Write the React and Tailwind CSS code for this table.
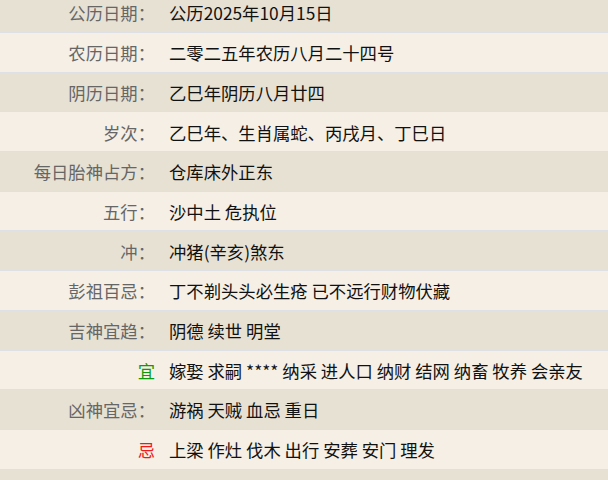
import React from "react";

const rows = [
  { k: "公历日期：", v: "公历2025年10月15日" },
  { k: "农历日期：", v: "二零二五年农历八月二十四号" },
  { k: "阴历日期：", v: "乙巳年阴历八月廿四" },
  { k: "岁次：", v: "乙巳年、生肖属蛇、丙戌月、丁巳日" },
  { k: "每日胎神占方：", v: "仓库床外正东" },
  { k: "五行：", v: "沙中土 危执位" },
  { k: "冲：", v: "冲猪(辛亥)煞东" },
  { k: "彭祖百忌：", v: "丁不剃头头必生疮 已不远行财物伏藏" },
  { k: "吉神宜趋：", v: "阴德 续世 明堂" },
  { k: "宜", v: "嫁娶 求嗣 **** 纳采 进人口 纳财 结网 纳畜 牧养 会亲友", c: "text-[#0a9a0a]" },
  { k: "凶神宜忌：", v: "游祸 天贼 血忌 重日" },
  { k: "忌", v: "上梁 作灶 伐木 出行 安葬 安门 理发", c: "text-[#f01818]" },
  { k: "", v: "" },
];

export default function App() {
  return (
    <div
      className="w-[608px] h-[480px] overflow-hidden bg-[#f5efe5]"
      style={{ fontFamily: '"Noto Sans CJK SC", "Noto Sans", sans-serif' }}
    >
      <div className="-mt-[6.7px]">
        {rows.map((r, i) => (
          <div
            key={i}
            className={`flex items-center pt-[1px] h-[39.7px] border-b border-[#dde1e6] text-[17.33px] leading-none ${
              i % 2 === 0 ? "bg-[#e7e1d4]" : "bg-[#f5efe5]"
            }`}
          >
            <div
              className={`w-[155px] shrink-0 text-right ${
                r.c ? r.c : "text-[#666666]"
              }`}
            >
              {r.k}
            </div>
            <div className="pl-[14px] text-[#111111] whitespace-nowrap">
              {r.v}
            </div>
          </div>
        ))}
      </div>
    </div>
  );
}
